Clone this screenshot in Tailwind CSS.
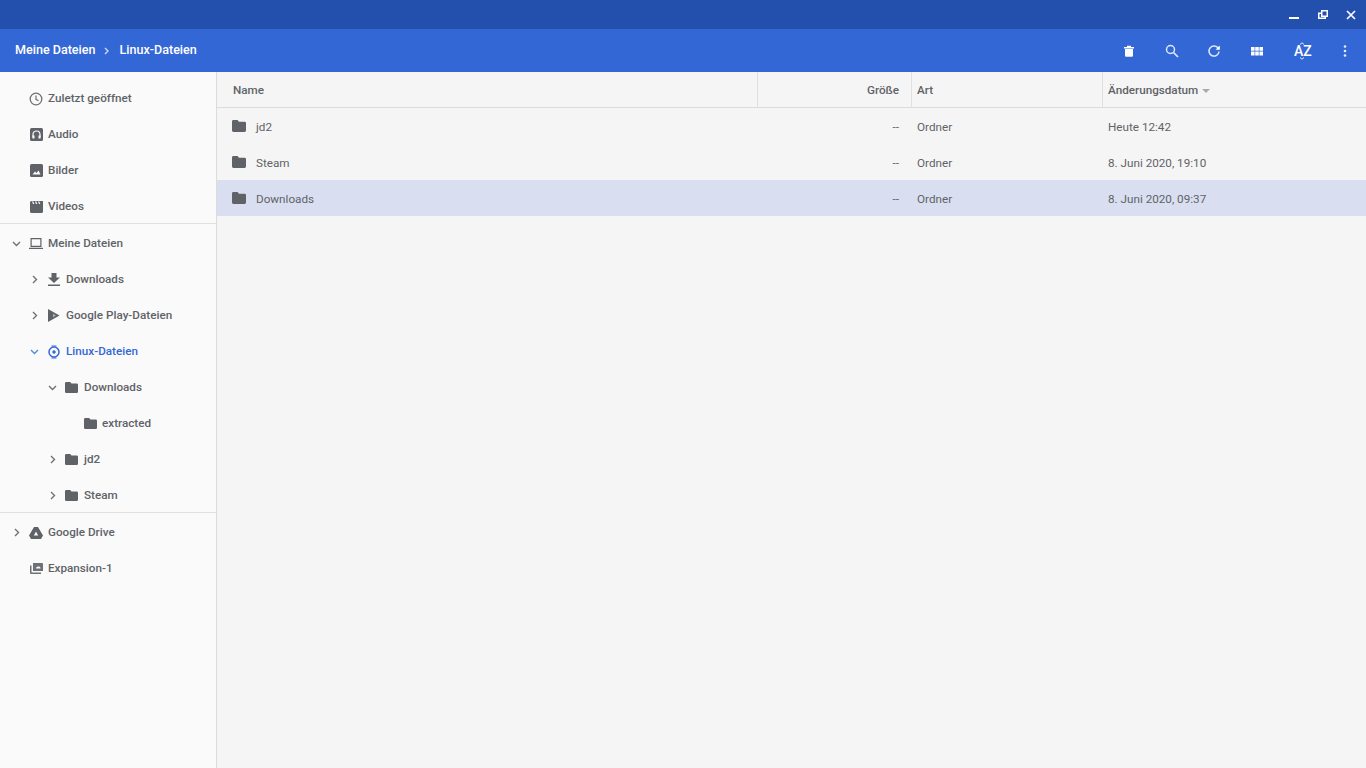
<!DOCTYPE html>
<html lang="de">
<head>
  <meta charset="UTF-8">
  <meta name="viewport" content="width=device-width, initial-scale=1.0">
  <title>Dateien - Linux-Dateien</title>
  <script src="https://cdn.jsdelivr.net/npm/@tailwindcss/browser@4"></script>
</head>
<body class="h-[768px] w-[1366px] overflow-hidden bg-[#f5f5f5] font-['Roboto',sans-serif] text-[11.7px] text-[#5f6368]">
  <!-- Title bar -->
  <div class="flex h-[29px] items-center justify-end bg-[#234fad] text-white">
    <svg class="mr-[19px] mt-[3px]" width="10" height="10" viewBox="0 0 10 10"><rect y="6" width="10" height="2" fill="#fff"/></svg>
    <svg class="mr-[18px]" width="10" height="10" viewBox="0 0 10 10"><path fill-rule="evenodd" fill="#fff" d="M3 0h7v7H8v2H0V2.500h3zM4.500 1.500v4h4v-4zM1.500 4v3.500h5V7H3V4z"/></svg>
    <svg class="mr-[10px]" width="10" height="10" viewBox="0 0 10 10"><path d="M1 1l8 8M9 1l-8 8" stroke="#fff" stroke-width="1.700"/></svg>
  </div>

  <!-- Toolbar -->
  <header class="flex h-[43px] items-center bg-[#3367d6] text-white">
    <div class="flex flex-1 items-center pl-[15px] text-[12.550px] font-medium">
      <span>Meine Dateien</span>
      <svg class="ml-[7px] mr-[8px] mt-[1px]" width="9" height="10" viewBox="0 0 9 10"><path d="M3 2l3 3-3 3" fill="none" stroke="#c9d8f5" stroke-width="1.400"/></svg>
      <span>Linux-Dateien</span>
    </div>
    <div class="flex items-center">
      <svg class="absolute left-[1122px] top-[44px]" width="14" height="14" viewBox="0 0 14 14"><path fill="#fff" d="M2 3h10v1.500H2zM5 1.800h4V3H5zM3 5h8v6.500a1.200 1.200 0 0 1-1.200 1.200H4.200A1.200 1.200 0 0 1 3 11.500z"/></svg>
      <svg class="absolute left-[1165px] top-[44px]" width="14" height="14" viewBox="0 0 14 14"><circle cx="5.500" cy="5.500" r="4" fill="none" stroke="#dfe8fa" stroke-width="1.500"/><path d="M8.500 8.500l4.500 4.500" stroke="#dfe8fa" stroke-width="1.700"/></svg>
      <svg class="absolute left-[1207px] top-[44px]" width="14" height="14" viewBox="0 0 14 14"><path d="M11.300 4.500A5 5 0 1 0 12 7.500" fill="none" stroke="#dfe8fa" stroke-width="1.500"/><path fill="#fff" d="M8.500 5.800h4.300V1.500z"/></svg>
      <svg class="absolute left-[1250px] top-[47px]" width="14" height="9" viewBox="0 0 14 9"><path fill="#fff" d="M1 0h3.600v3.800H1zM5.200 0h3.600v3.800H5.200zM9.400 0H13v3.800H9.400zM1 4.600h3.600v3.800H1zM5.200 4.600h3.600v3.800H5.200zM9.400 4.600H13v3.800H9.400z"/></svg>
      <span class="absolute left-[1294px] top-[43px] text-[14px] font-medium leading-[16px]">AZ</span>
      <svg class="absolute left-[1299px] top-[42px]" width="6" height="18" viewBox="0 0 6 18"><path d="M1 2.500L3 .8l2 1.700M1 15.500l2 1.700 2-1.700" fill="none" stroke="#dfe8fa"/></svg>
      <svg class="absolute left-[1343px] top-[45px]" width="4" height="12" viewBox="0 0 4 12"><circle cx="2" cy="1.500" r="1.300" fill="#e6edfb"/><circle cx="2" cy="6" r="1.300" fill="#e6edfb"/><circle cx="2" cy="10.500" r="1.300" fill="#e6edfb"/></svg>
    </div>
  </header>

  <div class="flex h-[696px]">
    <!-- Sidebar -->
    <aside class="w-[217px] shrink-0 border-r border-[#dcdcdc] bg-[#fafafa] font-medium">
      <div class="h-[152px] border-b border-[#e0e0e0] pt-[8px]">
        <div class="flex h-[36px] items-center pl-[29px] pt-[1px]"><svg class="mr-[5px]" width="14" height="14" viewBox="0 0 14 14"><circle cx="7" cy="7" r="5.800" fill="none" stroke="#6e7175" stroke-width="1.300"/><path d="M7 3.500V7.300l2.500 1.500" fill="none" stroke="#6e7175" stroke-width="1.200"/></svg>Zuletzt geöffnet</div>
        <div class="flex h-[36px] items-center pl-[30px] pt-[1px]"><svg class="mr-[5px]" width="13" height="13" viewBox="0 0 13 13"><rect width="13" height="13" rx="1.500" fill="#5f6368"/><path d="M3 9.500V6.500a3.500 3.500 0 0 1 7 0v3" fill="none" stroke="#fafafa" stroke-width="1.200"/><rect x="2.500" y="7.500" width="2" height="3" fill="#fafafa"/><rect x="8.500" y="7.500" width="2" height="3" fill="#fafafa"/></svg>Audio</div>
        <div class="flex h-[36px] items-center pl-[30px] pt-[1px]"><svg class="mr-[5px]" width="13" height="13" viewBox="0 0 13 13"><rect width="13" height="13" rx="1.500" fill="#5f6368"/><path d="M2.500 10.500l2.500-3 1.500 1.500 2-2.500 2 4z" fill="#fafafa"/></svg>Bilder</div>
        <div class="flex h-[36px] items-center pl-[30px] pt-[1px]"><svg class="mr-[5px]" width="13" height="12" viewBox="0 0 13 12"><path fill-rule="evenodd" fill="#5f6368" d="M0 1.500A1.500 1.500 0 0 1 1.500 0H13v10.500a1.500 1.500 0 0 1-1.500 1.500h-10A1.500 1.500 0 0 1 0 10.500zM2 .5l1 2.500h1.300L3.300.5zM5 .5l1 2.500h1.300L6.300.5zM8 .5l1 2.500h1.300L9.300.5z"/></svg>Videos</div>
      </div>

      <div class="h-[289px] border-b border-[#e0e0e0] pt-[1px]">
        <div class="flex h-[36px] items-center pl-[12px] pt-[1px]">
          <svg class="mr-[8px]" width="9" height="9" viewBox="0 0 9 9"><path d="M1 3l3.500 3.500L8 3" fill="none" stroke="#6e7175" stroke-width="1.400"/></svg>
          <svg class="mr-[5px]" width="14" height="13" viewBox="0 0 14 13"><path fill-rule="evenodd" fill="#5f6368" d="M1.500 1h11v9h-11zM2.700 2.200v6.600h8.600V2.200zM0 10.700h14v1.300H0z"/></svg>Meine Dateien
        </div>
        <div class="flex h-[36px] items-center pl-[30px] pt-[1px]">
          <svg class="mr-[8px]" width="9" height="9" viewBox="0 0 9 9"><path d="M3 1l3.500 3.500L3 8" fill="none" stroke="#6e7175" stroke-width="1.400"/></svg>
          <svg class="mr-[5px]" width="14" height="13" viewBox="0 0 14 13"><path fill="#5f6368" d="M4.500 0h5v4.500H13L7 10 1 4.500h3.500zM1 11.500h12V13H1z"/></svg>Downloads
        </div>
        <div class="flex h-[36px] items-center pl-[30px] pt-[1px]">
          <svg class="mr-[8px]" width="9" height="9" viewBox="0 0 9 9"><path d="M3 1l3.500 3.500L3 8" fill="none" stroke="#6e7175" stroke-width="1.400"/></svg>
          <svg class="mr-[5px]" width="14" height="13" viewBox="0 0 14 13"><path fill="#5f6368" d="M1 0l11.500 6.500L1 13z"/><path fill="#b4b6b9" d="M6 4.700l2.800 1.800L6 8.300z"/></svg>Google Play-Dateien
        </div>
        <div class="flex h-[36px] items-center pl-[30px] pt-[1px] text-[#3367d6]">
          <svg class="mr-[8px]" width="9" height="9" viewBox="0 0 9 9"><path d="M1 3l3.500 3.500L8 3" fill="none" stroke="#4a90d9" stroke-width="1.400"/></svg>
          <svg class="mr-[5px]" width="14" height="14" viewBox="0 0 14 14"><circle cx="7" cy="7" r="5" fill="none" stroke="#3367d6" stroke-width="1.500"/><circle cx="7" cy="7" r="1.700" fill="#3367d6"/><path d="M4.500 1h5M4.500 13h5" stroke="#3367d6" stroke-width="1.200"/></svg>Linux-Dateien
        </div>
        <div class="flex h-[36px] items-center pl-[48px] pt-[1px]">
          <svg class="mr-[8px]" width="9" height="9" viewBox="0 0 9 9"><path d="M1 3l3.500 3.500L8 3" fill="none" stroke="#6e7175" stroke-width="1.400"/></svg>
          <svg class="mr-[6px]" width="13" height="11" viewBox="0 0 13 11"><path fill="#5f6368" d="M1.300 0h3.900l1.300 1.500h5.200A1.300 1.300 0 0 1 13 2.800v6.900A1.300 1.300 0 0 1 11.700 11H1.300A1.300 1.300 0 0 1 0 9.700V1.300A1.300 1.300 0 0 1 1.300 0z"/></svg>Downloads
        </div>
        <div class="flex h-[36px] items-center pl-[84px] pt-[1px]">
          <svg class="mr-[5px]" width="13" height="11" viewBox="0 0 13 11"><path fill="#5f6368" d="M1.300 0h3.900l1.300 1.500h5.200A1.300 1.300 0 0 1 13 2.800v6.900A1.300 1.300 0 0 1 11.700 11H1.300A1.300 1.300 0 0 1 0 9.700V1.300A1.300 1.300 0 0 1 1.300 0z"/></svg>extracted
        </div>
        <div class="flex h-[36px] items-center pl-[48px] pt-[1px]">
          <svg class="mr-[8px]" width="9" height="9" viewBox="0 0 9 9"><path d="M3 1l3.500 3.500L3 8" fill="none" stroke="#6e7175" stroke-width="1.400"/></svg>
          <svg class="mr-[6px]" width="13" height="11" viewBox="0 0 13 11"><path fill="#5f6368" d="M1.300 0h3.900l1.300 1.500h5.200A1.300 1.300 0 0 1 13 2.800v6.900A1.300 1.300 0 0 1 11.700 11H1.300A1.300 1.300 0 0 1 0 9.700V1.300A1.300 1.300 0 0 1 1.300 0z"/></svg>jd2
        </div>
        <div class="flex h-[36px] items-center pl-[48px] pt-[1px]">
          <svg class="mr-[8px]" width="9" height="9" viewBox="0 0 9 9"><path d="M3 1l3.500 3.500L3 8" fill="none" stroke="#6e7175" stroke-width="1.400"/></svg>
          <svg class="mr-[6px]" width="13" height="11" viewBox="0 0 13 11"><path fill="#5f6368" d="M1.300 0h3.900l1.300 1.500h5.200A1.300 1.300 0 0 1 13 2.800v6.900A1.300 1.300 0 0 1 11.700 11H1.300A1.300 1.300 0 0 1 0 9.700V1.300A1.300 1.300 0 0 1 1.300 0z"/></svg>Steam
        </div>
      </div>

      <div class="pt-[1px]">
        <div class="flex h-[36px] items-center pl-[12px] pt-[1px]">
          <svg class="mr-[8px]" width="9" height="9" viewBox="0 0 9 9"><path d="M3 1l3.500 3.500L3 8" fill="none" stroke="#6e7175" stroke-width="1.400"/></svg>
          <svg class="mr-[5px]" width="14" height="12" viewBox="0 0 14 12"><path fill-rule="evenodd" fill="#5f6368" d="M5 0h4l5 8.500-2 3.500H2L0 8.500zM7 4.500L4.800 8.500h4.400z"/></svg>Google Drive
        </div>
        <div class="flex h-[36px] items-center pl-[30px] pt-[1px]"><svg class="mr-[5px]" width="13" height="11" viewBox="0 0 13 11"><path fill-rule="evenodd" fill="#6e7175" d="M3 0h9a1 1 0 0 1 1 1v7H3zM6 5.500h4.500A2 2 0 0 0 8 3.500 2 2 0 0 0 6 5.500zM0 2.500h1.500V9.500H11V11H1a1 1 0 0 1-1-1z"/></svg>Expansion-1</div>
      </div>
    </aside>

    <!-- File list -->
    <main class="flex-1">
      <div class="flex h-[36px] border-b border-[#dcdcdc] font-medium">
        <div class="flex w-[541px] items-center border-r border-[#e0e0e0] pl-[16px] pt-[2px]">Name</div>
        <div class="flex w-[154px] items-center justify-end border-r border-[#e0e0e0] pr-[12px] pt-[2px]">Größe</div>
        <div class="flex w-[191px] items-center border-r border-[#e0e0e0] pl-[5px] pt-[2px]">Art</div>
        <div class="flex flex-1 items-center pl-[5px] pt-[2px]">Änderungsdatum<svg class="ml-[4px] mt-[1px]" width="8" height="4" viewBox="0 0 8 4"><path d="M0 0h8L4 4z" fill="#a9abae"/></svg></div>
      </div>
      <div class="flex h-[36px] items-center pt-[3px]">
        <div class="flex w-[541px] items-center pl-[15px]"><svg class="mb-[2px] mr-[10px]" width="14" height="12" viewBox="0 0 13 11"><path fill="#5f6368" d="M1.300 0h3.900l1.300 1.500h5.200A1.300 1.300 0 0 1 13 2.800v6.900A1.300 1.300 0 0 1 11.700 11H1.300A1.300 1.300 0 0 1 0 9.700V1.300A1.300 1.300 0 0 1 1.300 0z"/></svg><span>jd2</span></div>
        <div class="w-[154px] pr-[13px] text-right">--</div>
        <div class="w-[191px] pl-[5px]">Ordner</div>
        <div class="flex-1 pl-[5px]">Heute 12:42</div>
      </div>
      <div class="flex h-[36px] items-center pt-[3px]">
        <div class="flex w-[541px] items-center pl-[15px]"><svg class="mb-[2px] mr-[10px]" width="14" height="12" viewBox="0 0 13 11"><path fill="#5f6368" d="M1.300 0h3.900l1.300 1.500h5.200A1.300 1.300 0 0 1 13 2.800v6.900A1.300 1.300 0 0 1 11.700 11H1.300A1.300 1.300 0 0 1 0 9.700V1.300A1.300 1.300 0 0 1 1.300 0z"/></svg><span>Steam</span></div>
        <div class="w-[154px] pr-[13px] text-right">--</div>
        <div class="w-[191px] pl-[5px]">Ordner</div>
        <div class="flex-1 pl-[5px]">8. Juni 2020, 19:10</div>
      </div>
      <div class="flex h-[36px] items-center bg-[#d9dff0] pt-[3px]">
        <div class="flex w-[541px] items-center pl-[15px]"><svg class="mb-[2px] mr-[10px]" width="14" height="12" viewBox="0 0 13 11"><path fill="#5f6368" d="M1.300 0h3.900l1.300 1.500h5.200A1.300 1.300 0 0 1 13 2.800v6.900A1.300 1.300 0 0 1 11.700 11H1.300A1.300 1.300 0 0 1 0 9.700V1.300A1.300 1.300 0 0 1 1.300 0z"/></svg><span>Downloads</span></div>
        <div class="w-[154px] pr-[13px] text-right">--</div>
        <div class="w-[191px] pl-[5px]">Ordner</div>
        <div class="flex-1 pl-[5px]">8. Juni 2020, 09:37</div>
      </div>
    </main>
  </div>
</body>
</html>
